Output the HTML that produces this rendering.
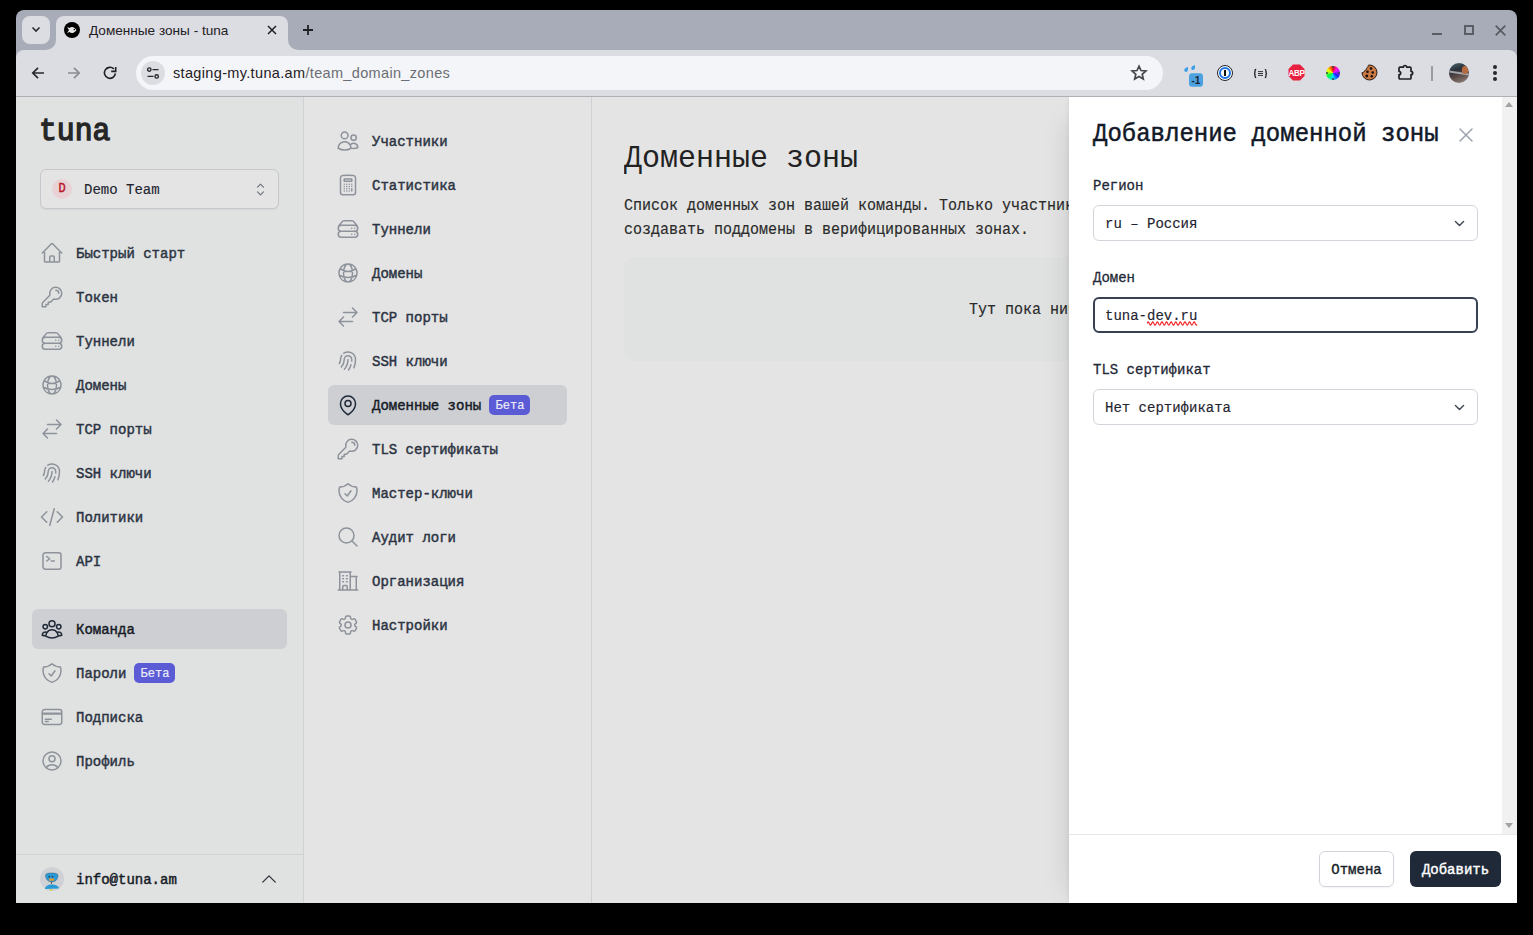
<!DOCTYPE html>
<html><head><meta charset="utf-8">
<style>
*{box-sizing:border-box;margin:0;padding:0}
html,body{width:1533px;height:935px;overflow:hidden;background:#000}
body{position:relative;font-family:"Liberation Mono",monospace}
.a{position:absolute}
.sans{font-family:"Liberation Sans",sans-serif}
svg{display:block}
#win{left:16px;top:10px;width:1501px;height:893px;background:#a8acb8;border-radius:8px 8px 0 0;overflow:hidden}
.tb{background:#dcdde2}
.ic{position:absolute;width:24px;height:24px;fill:none;stroke:#8d929b;stroke-width:1.5;stroke-linecap:round;stroke-linejoin:round}
.nav{position:absolute;font-size:14px;font-weight:normal;-webkit-text-stroke:0.45px #2c3443;color:#2c3443;white-space:nowrap;line-height:16px;margin-top:1px}
.badge{position:absolute;background:#5b5bd6;color:#ececf8;font-size:12px;border-radius:5px;height:20px;line-height:22px;text-align:center;font-weight:normal;-webkit-text-stroke:.2px #ececf8;text-indent:1px}
</style></head><body>
<div id="win" class="a">
  <!-- tab strip -->
  
  
  <!-- active tab -->
  <div class="a tb" style="left:40px;top:6px;width:232px;height:40px;border-radius:8px 8px 0 0"></div>
  <div class="a" style="left:30px;top:30px;width:10px;height:10px;background:#dcdde2"></div><div class="a" style="left:20px;top:20px;width:20px;height:20px;background:#a8acb8;border-bottom-right-radius:10px"></div><div class="a tb" style="left:6px;top:6px;width:28px;height:28px;border-radius:8px"></div>
  <svg class="a" style="left:14px;top:13px" width="12" height="12" viewBox="0 0 12 12"><path d="M2.5 4.5 6 8 9.5 4.5" fill="none" stroke="#2a2c30" stroke-width="1.6"/></svg>
  <div class="a" style="left:272px;top:30px;width:10px;height:10px;background:#dcdde2"></div><div class="a" style="left:272px;top:20px;width:20px;height:20px;background:#a8acb8;border-bottom-left-radius:10px"></div>
  <div class="a" style="left:48px;top:12px;width:16px;height:16px;border-radius:50%;background:#000"></div>
  <svg class="a" style="left:50px;top:15px" width="12" height="10" viewBox="0 0 12 10"><path d="M1 2 3 5 1 8 3.5 7C5 8.5 8 8.8 10.5 5 8 1.2 5 1.5 3.5 3Z" fill="#e6e6e6"/><circle cx="8.3" cy="4.6" r=".8" fill="#000"/></svg>
  <div class="a sans" style="left:73px;top:13px;font-size:13.6px;line-height:16px;color:#1f2023">Доменные зоны - tuna</div>
  <svg class="a" style="left:251px;top:15px" width="10" height="10" viewBox="0 0 10 10"><path d="M1 1l8 8M9 1 1 9" stroke="#1f2023" stroke-width="1.5"/></svg>
  <svg class="a" style="left:285px;top:13px" width="14" height="14" viewBox="0 0 14 14"><path d="M7 2v10M2 7h10" stroke="#1f2023" stroke-width="1.8"/></svg>
  <!-- window controls -->
  <div class="a" style="left:1416px;top:23px;width:10px;height:2px;background:#5a5d63"></div>
  <div class="a" style="left:1448px;top:15px;width:10px;height:10px;border:2px solid #5a5d63"></div>
  <svg class="a" style="left:1479px;top:15px" width="11" height="11" viewBox="0 0 11 11"><path d="M.7.7l9.6 9.6M10.3.7.7 10.3" stroke="#5a5d63" stroke-width="1.8"/></svg>

  <!-- toolbar -->
  <div class="a tb" style="left:0;top:40px;width:1501px;height:46px;border-radius:8px 8px 0 0"></div>
  <div class="a" style="left:0;top:86px;width:1501px;height:1px;background:#aeb0b6"></div>

  <!-- nav buttons -->
  <svg class="a" style="left:15px;top:56px" width="14" height="14" viewBox="0 0 14 14"><path d="M13 7H2.2M7 1.8 1.8 7 7 12.2" fill="none" stroke="#26282c" stroke-width="1.7"/></svg>
  <svg class="a" style="left:51px;top:56px" width="14" height="14" viewBox="0 0 14 14"><path d="M1 7h10.8M7 1.8 12.2 7 7 12.2" fill="none" stroke="#8a8c91" stroke-width="1.7"/></svg>
  <svg class="a" style="left:87px;top:56px" width="14" height="14" viewBox="0 0 14 14"><path d="M12.4 7.4A5.5 5.5 0 1 1 10.9 3" fill="none" stroke="#1f2023" stroke-width="1.6"/><path d="M8.2 5.4h4.5V.9" fill="none" stroke="#1f2023" stroke-width="1.6"/></svg>
  <!-- omnibox -->
  <div class="a" style="left:120px;top:46px;width:1027px;height:34px;border-radius:17px;background:#f4f5f8"></div>
  <div class="a" style="left:125px;top:51px;width:24px;height:24px;border-radius:50%;background:#dcdde2"></div>
  <svg class="a" style="left:130px;top:56px" width="14" height="14" viewBox="0 0 14 14"><circle cx="3.3" cy="3.6" r="1.7" fill="none" stroke="#26282c" stroke-width="1.4"/><path d="M6.5 3.6h6" stroke="#26282c" stroke-width="1.4"/><circle cx="10.7" cy="10.4" r="1.7" fill="none" stroke="#26282c" stroke-width="1.4"/><path d="M1.5 10.4h6" stroke="#26282c" stroke-width="1.4"/></svg>
  <div class="a sans" style="left:157px;top:54px;font-size:14.5px;line-height:18px;color:#1f2023;white-space:nowrap;letter-spacing:.34px">staging-my.tuna.am<span style="color:#6b6e74">/team_domain_zones</span></div>
  <svg class="a" style="left:1114px;top:54px" width="18" height="18" viewBox="0 0 18 18"><path d="M9 2.2l2 4.3 4.9.5-3.7 3.3 1.1 4.8L9 12.6l-4.3 2.5 1.1-4.8L2.1 7l4.9-.5z" fill="none" stroke="#45474c" stroke-width="1.7" stroke-linejoin="miter"/></svg>
  <!-- extensions -->
  <svg class="a" style="left:1166px;top:54px" width="22" height="24" viewBox="0 0 22 24"><path d="M5.6 2.8000000000000003C6.4 4.800000000000001 6.2 6.6000000000000005 5.2 7.4A1.8 1.8 0 0 1 2.2 6.0C2.4 4.6000000000000005 3.8 3.6000000000000005 5.6 2.8000000000000003Z" fill="#3e9ee6"/><path d="M12.6 1.0C13.4 3.0 13.2 4.8 12.2 5.6A1.8 1.8 0 0 1 9.2 4.2C9.4 2.8 10.8 1.8 12.6 1.0Z" fill="#3e9ee6"/><rect x="7" y="9.2" width="14" height="13.6" rx="3" fill="#4ca2e0"/><text x="14" y="20" font-family="Liberation Sans" font-weight="bold" font-size="11" text-anchor="middle" fill="#1d2633" transform="scale(.92 1)" style="transform-origin:14px 0">-1</text></svg>
  <div class="a" style="left:1201px;top:55px;width:16px;height:16px;border-radius:50%;border:1px solid #222;background:#fff"></div>
  <div class="a" style="left:1203px;top:57px;width:12px;height:12px;border-radius:50%;border:2px solid #1a73e8"></div>
  <div class="a" style="left:1208px;top:60px;width:2px;height:6px;background:#111"></div>
  <svg class="a" style="left:1237px;top:58px" width="15" height="11" viewBox="0 0 15 11"><path d="M3.2 1.3C2 1.3 2 2 2 3.3v1c0 .8-.3 1.2-1 1.2.7 0 1 .4 1 1.2v1c0 1.3 0 2 1.2 2M11.8 1.3c1.2 0 1.2.7 1.2 2v1c0 .8.3 1.2 1 1.2-.7 0-1 .4-1 1.2v1c0 1.3 0 2-1.2 2" fill="none" stroke="#1f2023" stroke-width="1.3"/><path d="M5 3.6h5M5 5.5h5M5 7.4h5" stroke="#1f2023" stroke-width=".9"/></svg>
  <svg class="a" style="left:1272px;top:54px" width="17" height="17" viewBox="0 0 17 17"><path d="M5 .5h7L16.5 5v7L12 16.5H5L.5 12V5z" fill="#e8203f"/><text x="8.5" y="11.9" font-family="Liberation Sans" font-weight="bold" font-size="8" text-anchor="middle" fill="#fff" transform="scale(1 1.15)" style="transform-origin:8.5px 8.5px" letter-spacing="-.3">ABP</text></svg>
  <div class="a" style="left:1310px;top:56px;width:13.5px;height:13.5px;border-radius:50%;background:conic-gradient(#e01010,#ff10ff 50deg,#2020ff 120deg,#00e0ff 180deg,#00ff40 240deg,#ffff00 300deg,#ff8000 330deg,#e01010)"></div><div class="a" style="left:1316px;top:56px;width:2px;height:2px;border-radius:50%;background:#3a4a4a"></div><div class="a" style="left:1316px;top:67.5px;width:2px;height:2px;border-radius:50%;background:#3a4a4a"></div><div class="a" style="left:1309.7px;top:61.8px;width:2px;height:2px;border-radius:50%;background:#3a4a4a"></div><div class="a" style="left:1321.8px;top:61.8px;width:2px;height:2px;border-radius:50%;background:#3a4a4a"></div>
  <svg class="a" style="left:1345px;top:54px" width="17" height="17" viewBox="0 0 17 17"><g transform="translate(17 0) scale(-1 1)"><path d="M8.5 1A7.5 7.5 0 1 0 16 8.6c-1.2.2-2.3-.6-2.4-1.8-1.3-.1-2.2-1.2-2-2.5-1.2-.3-1.9-1.4-1.6-2.6-.5-.5-1-.7-1.5-.7z" fill="#c97a45" stroke="#2b1a10" stroke-width="1"/></g><circle cx="10" cy="4.5" r="1.3" fill="#1a0f08"/><circle cx="6.5" cy="7.8" r="1.3" fill="#1a0f08"/><circle cx="11.7" cy="8.5" r="1.2" fill="#1a0f08"/><circle cx="5.8" cy="12" r="1.4" fill="#1a0f08"/><circle cx="10.8" cy="12.3" r="1.2" fill="#1a0f08"/></svg>
  <svg class="a" style="left:1381px;top:53px" width="18" height="18" viewBox="0 0 18 18"><path d="M2 5.2a1 1 0 0 1 1-1H6.3a1.7 1.7 0 0 1 3.4 0H13a1 1 0 0 1 1 1V8.3a1.7 1.7 0 0 1 0 3.4V15a1 1 0 0 1-1 1H3a1 1 0 0 1-1-1V11.7a1.7 1.7 0 0 0 0-3.4Z" fill="none" stroke="#1f2023" stroke-width="1.7" stroke-linejoin="round"/></svg>
  <div class="a" style="left:1415px;top:56px;width:1.5px;height:15px;background:#9a9ca2"></div>
  <div class="a" style="left:1433px;top:53px;width:20px;height:20px;border-radius:50%;overflow:hidden;background:linear-gradient(160deg,#4a6a78 0%,#2a2f38 35%,#5a4a48 60%,#9a8a80 100%)"><div class="a" style="left:0;top:9px;width:20px;height:2px;background:#a0a4a8;transform:rotate(8deg)"></div><div class="a" style="left:13px;top:3px;width:6px;height:8px;border-radius:3px;background:#b86a40"></div></div>
  <div class="a" style="left:1477px;top:55px;width:4px;height:4px;border-radius:50%;background:#26282c"></div>
  <div class="a" style="left:1477px;top:61px;width:4px;height:4px;border-radius:50%;background:#26282c"></div>
  <div class="a" style="left:1477px;top:67px;width:4px;height:4px;border-radius:50%;background:#26282c"></div>
</div>
<div id="page" class="a" style="left:0;top:0;width:1533px;height:935px;clip-path:inset(97px 16px 32px 16px)">
<div class="a" style="left:16px;top:97px;width:288px;height:806px;background:#e0e2e1;border-right:1px solid #d0d1d5"></div>
<div class="a" style="left:304px;top:97px;width:288px;height:806px;background:#e4e4e4;border-right:1px solid #d0d1d5"></div>
<div class="a" style="left:592px;top:97px;width:477px;height:806px;background:#e4e4e4"></div>
<div class="a" style="left:39px;top:112px;font-size:32px;line-height:40px;font-weight:normal;-webkit-text-stroke:1.4px #262626;color:#262626;transform:scaleX(.93);transform-origin:0 0">tuna</div>
<div class="a" style="left:40px;top:169px;width:239px;height:40px;border:1px solid #c6c8cd;border-radius:6px;background:#e4e4e4;box-shadow:0 1px 1px rgba(0,0,0,.05)"></div>
<div class="a" style="left:52px;top:179px;width:20px;height:20px;border-radius:50%;background:#e8d2d5;color:#b8172a;font-size:12px;line-height:21px;text-align:center;-webkit-text-stroke:.4px #b8172a">D</div>
<div class="a" style="left:84px;top:182px;font-size:14px;line-height:16px;color:#1f2430;white-space:nowrap;-webkit-text-stroke:.15px #1f2430">Demo Team</div>
<svg class="ic" style="left:251px;top:180px;width:19px;height:19px;stroke:#6f747c" viewBox="0 0 24 24"><path d="M8.25 15 12 18.75 15.75 15m-7.5-6L12 5.25 15.75 9"/></svg>
<svg class="ic" style="left:40px;top:241px" viewBox="0 0 24 24"><path d="m2.25 12 8.954-8.955c.44-.439 1.152-.439 1.591 0L21.75 12M4.5 9.75v10.125c0 .621.504 1.125 1.125 1.125H9.75v-4.875c0-.621.504-1.125 1.125-1.125h2.25c.621 0 1.125.504 1.125 1.125V21h4.125c.621 0 1.125-.504 1.125-1.125V9.75M8.25 21h8.25"/></svg>
<div class="nav" style="left:76px;top:245px">Быстрый старт</div>
<svg class="ic" style="left:40px;top:285px" viewBox="0 0 24 24"><path d="M15.75 5.25a3 3 0 0 1 3 3m3 0a6 6 0 0 1-7.029 5.912c-.563-.097-1.159.026-1.563.43L10.5 17.25H8.25v2.25H6v2.25H2.25v-2.818c0-.597.237-1.17.659-1.591l6.499-6.499c.404-.404.527-1 .43-1.563A6 6 0 1 1 21.75 8.25Z"/></svg>
<div class="nav" style="left:76px;top:289px">Токен</div>
<svg class="ic" style="left:40px;top:329px" viewBox="0 0 24 24"><path d="M5.25 14.25h13.5m-13.5 0a3 3 0 0 1-3-3m3 3a3 3 0 1 0 0 6h13.5a3 3 0 1 0 0-6m-16.5-3a3 3 0 0 1 3-3h13.5a3 3 0 0 1 3 3m-19.5 0a4.5 4.5 0 0 1 .9-2.7L5.737 5.1a3.375 3.375 0 0 1 2.7-1.35h7.126c1.062 0 2.062.5 2.7 1.35l2.587 3.45a4.5 4.5 0 0 1 .9 2.7m0 0a3 3 0 0 1-3 3m0 3h.008v.008h-.008v-.008Zm0-6h.008v.008h-.008v-.008Zm-3 6h.008v.008h-.008v-.008Zm0-6h.008v.008h-.008v-.008Z"/></svg>
<div class="nav" style="left:76px;top:333px">Туннели</div>
<svg class="ic" style="left:40px;top:373px" viewBox="0 0 24 24"><path d="M12 21a9.004 9.004 0 0 0 8.716-6.747M12 21a9.004 9.004 0 0 1-8.716-6.747M12 21c2.485 0 4.5-4.03 4.5-9S14.485 3 12 3m0 18c-2.485 0-4.5-4.03-4.5-9S9.515 3 12 3m0 0a8.997 8.997 0 0 1 7.843 4.582M12 3a8.997 8.997 0 0 0-7.843 4.582m15.686 0A11.953 11.953 0 0 1 12 10.5c-2.998 0-5.74-1.1-7.843-2.918m15.686 0A8.959 8.959 0 0 1 21 12c0 .778-.099 1.533-.284 2.253m0 0A17.919 17.919 0 0 1 12 16.5c-3.162 0-6.133-.815-8.716-2.247m0 0A9.015 9.015 0 0 1 3 12c0-1.605.42-3.113 1.157-4.418"/></svg>
<div class="nav" style="left:76px;top:377px">Домены</div>
<svg class="ic" style="left:40px;top:417px" viewBox="0 0 24 24"><path d="M7.5 21 3 16.5m0 0L7.5 12M3 16.5h13.5m0-13.5L21 7.5m0 0L16.5 12M21 7.5H7.5"/></svg>
<div class="nav" style="left:76px;top:421px">TCP порты</div>
<svg class="ic" style="left:40px;top:461px" viewBox="0 0 24 24"><path d="M7.864 4.243A7.5 7.5 0 0 1 19.5 10.5c0 2.92-.556 5.709-1.568 8.268M5.742 6.364A7.465 7.465 0 0 0 4.5 10.5a7.464 7.464 0 0 1-1.15 3.993m1.989 3.559A11.209 11.209 0 0 0 8.25 10.5a3.75 3.75 0 1 1 7.5 0c0 .527-.021 1.049-.064 1.565M12 10.5a14.94 14.94 0 0 1-3.6 9.75m6.633-4.596a18.666 18.666 0 0 1-2.485 5.33"/></svg>
<div class="nav" style="left:76px;top:465px">SSH ключи</div>
<svg class="ic" style="left:40px;top:505px" viewBox="0 0 24 24"><path d="M17.25 6.75 22.5 12l-5.25 5.25m-10.5 0L1.5 12l5.25-5.25m7.5-3-4.5 16.5"/></svg>
<div class="nav" style="left:76px;top:509px">Политики</div>
<svg class="ic" style="left:40px;top:549px" viewBox="0 0 24 24"><path d="m6.75 7.5 3 2.25-3 2.25m4.5 0h3m-9 8.25h13.5A2.25 2.25 0 0 0 21 18V6a2.25 2.25 0 0 0-2.25-2.25H5.25A2.25 2.25 0 0 0 3 6v12a2.25 2.25 0 0 0 2.25 2.25Z"/></svg>
<div class="nav" style="left:76px;top:553px">API</div>
<div class="a" style="left:32px;top:609px;width:255px;height:40px;border-radius:6px;background:#cdcfd3"></div>
<svg class="ic" style="left:40px;top:617px;stroke:#1f2937" viewBox="0 0 24 24"><path d="M18 18.72a9.094 9.094 0 0 0 3.741-.479 3 3 0 0 0-4.682-2.72m.94 3.198.001.031c0 .225-.012.447-.037.666A11.944 11.944 0 0 1 12 21c-2.17 0-4.207-.576-5.963-1.584A6.062 6.062 0 0 1 6 18.719m12 0a5.971 5.971 0 0 0-.941-3.197m0 0A5.995 5.995 0 0 0 12 12.75a5.995 5.995 0 0 0-5.058 2.772m0 0a3 3 0 0 0-4.681 2.72 8.986 8.986 0 0 0 3.74.477m.94-3.197a5.971 5.971 0 0 0-.94 3.197M15 6.75a3 3 0 1 1-6 0 3 3 0 0 1 6 0Zm6 3a2.25 2.25 0 1 1-4.5 0 2.25 2.25 0 0 1 4.5 0Zm-13.5 0a2.25 2.25 0 1 1-4.5 0 2.25 2.25 0 0 1 4.5 0Z"/></svg>
<div class="nav" style="left:76px;top:621px;color:#161b26;-webkit-text-stroke-color:#161b26">Команда</div>
<svg class="ic" style="left:40px;top:661px" viewBox="0 0 24 24"><path d="M9 12.75 11.25 15 15 9.75m-3-7.036A11.959 11.959 0 0 1 3.598 6 11.99 11.99 0 0 0 3 9.749c0 5.592 3.824 10.29 9 11.623 5.176-1.332 9-6.03 9-11.622 0-1.31-.21-2.571-.598-3.751h-.152c-3.196 0-6.1-1.248-8.25-3.285Z"/></svg>
<div class="nav" style="left:76px;top:665px">Пароли</div>
<div class="badge" style="left:134px;top:663px;width:41px">Бета</div>
<svg class="ic" style="left:40px;top:705px" viewBox="0 0 24 24"><path d="M2.25 8.25h19.5M2.25 9h19.5m-16.5 5.25h6m-6 2.25h3m-3.75 3h15a2.25 2.25 0 0 0 2.25-2.25V6.75A2.25 2.25 0 0 0 19.5 4.5h-15a2.25 2.25 0 0 0-2.25 2.25v10.5A2.25 2.25 0 0 0 4.5 19.5Z"/></svg>
<div class="nav" style="left:76px;top:709px">Подписка</div>
<svg class="ic" style="left:40px;top:749px" viewBox="0 0 24 24"><path d="M17.982 18.725A7.488 7.488 0 0 0 12 15.75a7.488 7.488 0 0 0-5.982 2.975m11.963 0a9 9 0 1 0-11.963 0m11.963 0A8.966 8.966 0 0 1 12 21a8.966 8.966 0 0 1-5.982-2.275M15 9.75a3 3 0 1 1-6 0 3 3 0 0 1 6 0Z"/></svg>
<div class="nav" style="left:76px;top:753px">Профиль</div>
<div class="a" style="left:16px;top:854px;width:288px;height:1px;background:#d0d1d5"></div>
<svg class="a" style="left:40px;top:867px" width="24" height="24" viewBox="0 0 24 24"><circle cx="12" cy="12" r="12" fill="#d0d1d5"/><path d="M5.5 8.5C5.5 6.5 8 6 11.5 6S18 6.5 18 8.5c0 3-1.5 6-6 6.5C8 15 5.5 12 5.5 8.5z" fill="#2a9ad6" stroke="#3a5060" stroke-width=".4"/><circle cx="9.2" cy="9.8" r=".8" fill="#183040"/><circle cx="12.5" cy="9.8" r=".8" fill="#183040"/><rect x="9" y="11.5" width="5" height="2.2" fill="#e89a2a"/><path d="M11.5 15v2" stroke="#604040" stroke-width=".8"/><path d="M5 22c0-2.5 3-4.5 6.5-4.5S19 19 19 21.5z" fill="#2a9ad6"/><ellipse cx="11" cy="23" rx="1.5" ry=".8" fill="#d8d020"/></svg>
<div class="a" style="left:76px;top:872px;font-size:14px;line-height:16px;color:#161b26;-webkit-text-stroke:.45px #161b26">info@tuna.am</div>
<svg class="ic" style="left:259px;top:869px;width:20px;height:20px;stroke:#2a2f38" viewBox="0 0 24 24"><path d="m4.5 15.75 7.5-7.5 7.5 7.5"/></svg>
<svg class="ic" style="left:336px;top:129px" viewBox="0 0 24 24"><path d="M15 19.128a9.38 9.38 0 0 0 2.625.372 9.337 9.337 0 0 0 4.121-.952 4.125 4.125 0 0 0-7.533-2.493M15 19.128v-.003c0-1.113-.285-2.16-.786-3.07M15 19.128v.106A12.318 12.318 0 0 1 8.624 21c-2.331 0-4.512-.645-6.374-1.766l-.001-.109a6.375 6.375 0 0 1 11.964-3.07M12 6.375a3.375 3.375 0 1 1-6.75 0 3.375 3.375 0 0 1 6.75 0Zm8.25 2.25a2.625 2.625 0 1 1-5.25 0 2.625 2.625 0 0 1 5.25 0Z"/></svg>
<div class="nav" style="left:372px;top:133px">Участники</div>
<svg class="ic" style="left:336px;top:173px" viewBox="0 0 24 24"><path d="M15.75 15.75V18m-7.5-6.75h.008v.008H8.25v-.008Zm0 2.25h.008v.008H8.25V13.5Zm0 2.25h.008v.008H8.25v-.008Zm0 2.25h.008v.008H8.25V18Zm2.498-6.75h.007v.008h-.007v-.008Zm0 2.25h.007v.008h-.007V13.5Zm0 2.25h.007v.008h-.007v-.008Zm0 2.25h.007v.008h-.007V18Zm2.504-6.75h.008v.008h-.008v-.008Zm0 2.25h.008v.008h-.008V13.5Zm0 2.25h.008v.008h-.008v-.008Zm0 2.25h.008v.008h-.008V18Zm2.498-6.75h.008v.008h-.008v-.008Zm0 2.25h.008v.008h-.008V13.5ZM8.25 6h7.5v2.25h-7.5V6ZM12 2.25c-1.892 0-3.758.11-5.593.322C5.307 2.7 4.5 3.65 4.5 4.757V19.5a2.25 2.25 0 0 0 2.25 2.25h10.5a2.25 2.25 0 0 0 2.25-2.25V4.757c0-1.108-.806-2.057-1.907-2.185A48.507 48.507 0 0 0 12 2.25Z"/></svg>
<div class="nav" style="left:372px;top:177px">Статистика</div>
<svg class="ic" style="left:336px;top:217px" viewBox="0 0 24 24"><path d="M5.25 14.25h13.5m-13.5 0a3 3 0 0 1-3-3m3 3a3 3 0 1 0 0 6h13.5a3 3 0 1 0 0-6m-16.5-3a3 3 0 0 1 3-3h13.5a3 3 0 0 1 3 3m-19.5 0a4.5 4.5 0 0 1 .9-2.7L5.737 5.1a3.375 3.375 0 0 1 2.7-1.35h7.126c1.062 0 2.062.5 2.7 1.35l2.587 3.45a4.5 4.5 0 0 1 .9 2.7m0 0a3 3 0 0 1-3 3m0 3h.008v.008h-.008v-.008Zm0-6h.008v.008h-.008v-.008Zm-3 6h.008v.008h-.008v-.008Zm0-6h.008v.008h-.008v-.008Z"/></svg>
<div class="nav" style="left:372px;top:221px">Туннели</div>
<svg class="ic" style="left:336px;top:261px" viewBox="0 0 24 24"><path d="M12 21a9.004 9.004 0 0 0 8.716-6.747M12 21a9.004 9.004 0 0 1-8.716-6.747M12 21c2.485 0 4.5-4.03 4.5-9S14.485 3 12 3m0 18c-2.485 0-4.5-4.03-4.5-9S9.515 3 12 3m0 0a8.997 8.997 0 0 1 7.843 4.582M12 3a8.997 8.997 0 0 0-7.843 4.582m15.686 0A11.953 11.953 0 0 1 12 10.5c-2.998 0-5.74-1.1-7.843-2.918m15.686 0A8.959 8.959 0 0 1 21 12c0 .778-.099 1.533-.284 2.253m0 0A17.919 17.919 0 0 1 12 16.5c-3.162 0-6.133-.815-8.716-2.247m0 0A9.015 9.015 0 0 1 3 12c0-1.605.42-3.113 1.157-4.418"/></svg>
<div class="nav" style="left:372px;top:265px">Домены</div>
<svg class="ic" style="left:336px;top:305px" viewBox="0 0 24 24"><path d="M7.5 21 3 16.5m0 0L7.5 12M3 16.5h13.5m0-13.5L21 7.5m0 0L16.5 12M21 7.5H7.5"/></svg>
<div class="nav" style="left:372px;top:309px">TCP порты</div>
<svg class="ic" style="left:336px;top:349px" viewBox="0 0 24 24"><path d="M7.864 4.243A7.5 7.5 0 0 1 19.5 10.5c0 2.92-.556 5.709-1.568 8.268M5.742 6.364A7.465 7.465 0 0 0 4.5 10.5a7.464 7.464 0 0 1-1.15 3.993m1.989 3.559A11.209 11.209 0 0 0 8.25 10.5a3.75 3.75 0 1 1 7.5 0c0 .527-.021 1.049-.064 1.565M12 10.5a14.94 14.94 0 0 1-3.6 9.75m6.633-4.596a18.666 18.666 0 0 1-2.485 5.33"/></svg>
<div class="nav" style="left:372px;top:353px">SSH ключи</div>
<div class="a" style="left:328px;top:385px;width:239px;height:40px;border-radius:6px;background:#cdcfd3"></div>
<svg class="ic" style="left:336px;top:393px;stroke:#1f2937" viewBox="0 0 24 24"><path d="M15 10.5a3 3 0 1 1-6 0 3 3 0 0 1 6 0Z"/><path d="M19.5 10.5c0 7.142-7.5 11.25-7.5 11.25S4.5 17.642 4.5 10.5a7.5 7.5 0 1 1 15 0Z"/></svg>
<div class="badge" style="left:489px;top:395px;width:41px">Бета</div>
<div class="nav" style="left:372px;top:397px;color:#161b26;-webkit-text-stroke-color:#161b26">Доменные зоны</div>
<svg class="ic" style="left:336px;top:437px" viewBox="0 0 24 24"><path d="M15.75 5.25a3 3 0 0 1 3 3m3 0a6 6 0 0 1-7.029 5.912c-.563-.097-1.159.026-1.563.43L10.5 17.25H8.25v2.25H6v2.25H2.25v-2.818c0-.597.237-1.17.659-1.591l6.499-6.499c.404-.404.527-1 .43-1.563A6 6 0 1 1 21.75 8.25Z"/></svg>
<div class="nav" style="left:372px;top:441px">TLS сертификаты</div>
<svg class="ic" style="left:336px;top:481px" viewBox="0 0 24 24"><path d="M9 12.75 11.25 15 15 9.75m-3-7.036A11.959 11.959 0 0 1 3.598 6 11.99 11.99 0 0 0 3 9.749c0 5.592 3.824 10.29 9 11.623 5.176-1.332 9-6.03 9-11.622 0-1.31-.21-2.571-.598-3.751h-.152c-3.196 0-6.1-1.248-8.25-3.285Z"/></svg>
<div class="nav" style="left:372px;top:485px">Мастер-ключи</div>
<svg class="ic" style="left:336px;top:525px" viewBox="0 0 24 24"><path d="m21 21-5.197-5.197m0 0A7.5 7.5 0 1 0 5.196 5.196a7.5 7.5 0 0 0 10.607 10.607Z"/></svg>
<div class="nav" style="left:372px;top:529px">Аудит логи</div>
<svg class="ic" style="left:336px;top:569px" viewBox="0 0 24 24"><path d="M2.25 21h19.5m-18-18v18m10.5-18v18m6-13.5V21M6.75 6.75h.75m-.75 3h.75m-.75 3h.75m3-6h.75m-.75 3h.75m-.75 3h.75M6.75 21v-3.375c0-.621.504-1.125 1.125-1.125h2.25c.621 0 1.125.504 1.125 1.125V21M3 3h12m-.75 4.5H21"/></svg>
<div class="nav" style="left:372px;top:573px">Организация</div>
<svg class="ic" style="left:336px;top:613px" viewBox="0 0 24 24"><path d="M9.594 3.94c.09-.542.56-.94 1.11-.94h2.593c.55 0 1.02.398 1.11.94l.213 1.281c.063.374.313.686.645.87.074.04.147.083.22.127.325.196.72.257 1.075.124l1.217-.456a1.125 1.125 0 0 1 1.37.49l1.296 2.247a1.125 1.125 0 0 1-.26 1.431l-1.003.827c-.293.241-.438.613-.43.992a7.723 7.723 0 0 1 0 .255c-.008.378.137.75.43.991l1.004.827c.424.35.534.955.26 1.43l-1.298 2.247a1.125 1.125 0 0 1-1.369.491l-1.217-.456c-.355-.133-.75-.072-1.076.124a6.47 6.47 0 0 1-.22.128c-.331.183-.581.495-.644.869l-.213 1.281c-.09.543-.56.94-1.11.94h-2.594c-.55 0-1.019-.398-1.11-.94l-.213-1.281c-.062-.374-.312-.686-.644-.87a6.52 6.52 0 0 1-.22-.127c-.325-.196-.72-.257-1.076-.124l-1.217.456a1.125 1.125 0 0 1-1.369-.49l-1.297-2.247a1.125 1.125 0 0 1 .26-1.431l1.004-.827c.292-.24.437-.613.43-.991a6.932 6.932 0 0 1 0-.255c.007-.38-.138-.751-.43-.992l-1.004-.827a1.125 1.125 0 0 1-.26-1.43l1.297-2.247a1.125 1.125 0 0 1 1.37-.491l1.216.456c.356.133.751.072 1.076-.124.072-.044.146-.086.22-.128.332-.183.582-.495.644-.869l.214-1.28Z"/><path d="M15 12a3 3 0 1 1-6 0 3 3 0 0 1 6 0Z"/></svg>
<div class="nav" style="left:372px;top:617px">Настройки</div>
<div class="a" style="left:624px;top:139px;font-size:32px;line-height:40px;color:#222;white-space:nowrap;transform:scaleX(.9375);transform-origin:0 0">Доменные зоны</div>
<div class="a" style="left:624px;top:194px;font-size:16px;line-height:24px;color:#2a2a2a;white-space:nowrap;transform:scaleX(.9375);transform-origin:0 0;-webkit-text-stroke:.15px #2a2a2a">Список доменных зон вашей команды. Только участники<br>создавать поддомены в верифицированных зонах.</div>
<div class="a" style="left:624px;top:257px;width:900px;height:104px;border-radius:12px;background:#e0e1e1"></div>
<div class="a" style="left:969px;top:300px;font-size:16px;line-height:20px;color:#2a2a2a;white-space:nowrap;transform:scaleX(.9375);transform-origin:0 0;-webkit-text-stroke:.15px #2a2a2a">Тут пока ничего нет</div>
<div class="a" style="left:1069px;top:122px;width:448px;height:770px;background:#fff;box-shadow:0 0 26px rgba(0,0,0,.13)"></div><div class="a" style="left:1069px;top:97px;width:448px;height:806px;background:#fff;box-shadow:0 0 5px rgba(0,0,0,.08)"></div>
<div class="a" style="left:1093px;top:120px;font-size:25px;line-height:30px;color:#111827;white-space:nowrap;transform:scaleX(.96);transform-origin:0 0;-webkit-text-stroke:.5px #111827">Добавление доменной зоны</div>
<svg class="ic" style="left:1454px;top:123px;stroke:#9ca3af;stroke-width:1.5" viewBox="0 0 24 24"><path d="M6 18 18 6M6 6l12 12"/></svg>
<div class="a" style="left:1093px;top:178px;font-size:14px;line-height:16px;color:#1f2937;white-space:nowrap;-webkit-text-stroke:.3px #1f2937">Регион</div>
<div class="a" style="left:1093px;top:270px;font-size:14px;line-height:16px;color:#1f2937;white-space:nowrap;-webkit-text-stroke:.3px #1f2937">Домен</div>
<div class="a" style="left:1093px;top:362px;font-size:14px;line-height:16px;color:#1f2937;white-space:nowrap;-webkit-text-stroke:.3px #1f2937">TLS сертификат</div>
<div class="a" style="left:1093px;top:205px;width:385px;height:36px;border:1px solid #d1d5db;border-radius:6px"></div>
<div class="a" style="left:1105px;top:216px;font-size:14px;line-height:16px;color:#1f2430;white-space:nowrap;-webkit-text-stroke:.15px #1f2430">ru – Россия</div>
<svg class="ic" style="left:1453px;top:217px;width:13px;height:13px;stroke:#3f4753;stroke-width:2.6" viewBox="0 0 24 24"><path d="m19.5 8.25-7.5 7.5-7.5-7.5"/></svg>
<div class="a" style="left:1093px;top:297px;width:385px;height:36px;border:2px solid #374151;border-radius:6px"></div>
<div class="a" style="left:1105px;top:308px;font-size:14px;line-height:16px;color:#1f2430;white-space:nowrap;-webkit-text-stroke:.15px #1f2430">tuna-dev.ru</div>
<svg class="a" style="left:1147px;top:321px" width="51" height="5" viewBox="0 0 51 5"><path d="M0.00 2.50 L0.25 1.96 L0.50 1.49 L0.75 1.13 L1.00 0.93 L1.25 0.91 L1.50 1.08 L1.75 1.41 L2.00 1.86 L2.25 2.39 L2.50 2.93 L2.75 3.42 L3.00 3.81 L3.25 4.04 L3.50 4.10 L3.75 3.97 L4.00 3.67 L4.25 3.24 L4.50 2.72 L4.75 2.17 L5.00 1.67 L5.25 1.26 L5.50 0.99 L5.75 0.90 L6.00 0.99 L6.25 1.26 L6.50 1.67 L6.75 2.17 L7.00 2.72 L7.25 3.24 L7.50 3.67 L7.75 3.97 L8.00 4.10 L8.25 4.04 L8.50 3.81 L8.75 3.42 L9.00 2.93 L9.25 2.39 L9.50 1.86 L9.75 1.41 L10.00 1.08 L10.25 0.91 L10.50 0.93 L10.75 1.13 L11.00 1.49 L11.25 1.96 L11.50 2.50 L11.75 3.04 L12.00 3.51 L12.25 3.87 L12.50 4.07 L12.75 4.09 L13.00 3.92 L13.25 3.59 L13.50 3.14 L13.75 2.61 L14.00 2.07 L14.25 1.58 L14.50 1.19 L14.75 0.96 L15.00 0.90 L15.25 1.03 L15.50 1.33 L15.75 1.76 L16.00 2.28 L16.25 2.83 L16.50 3.33 L16.75 3.74 L17.00 4.01 L17.25 4.10 L17.50 4.01 L17.75 3.74 L18.00 3.33 L18.25 2.83 L18.50 2.28 L18.75 1.76 L19.00 1.33 L19.25 1.03 L19.50 0.90 L19.75 0.96 L20.00 1.19 L20.25 1.58 L20.50 2.07 L20.75 2.61 L21.00 3.14 L21.25 3.59 L21.50 3.92 L21.75 4.09 L22.00 4.07 L22.25 3.87 L22.50 3.51 L22.75 3.04 L23.00 2.50 L23.25 1.96 L23.50 1.49 L23.75 1.13 L24.00 0.93 L24.25 0.91 L24.50 1.08 L24.75 1.41 L25.00 1.86 L25.25 2.39 L25.50 2.93 L25.75 3.42 L26.00 3.81 L26.25 4.04 L26.50 4.10 L26.75 3.97 L27.00 3.67 L27.25 3.24 L27.50 2.72 L27.75 2.17 L28.00 1.67 L28.25 1.26 L28.50 0.99 L28.75 0.90 L29.00 0.99 L29.25 1.26 L29.50 1.67 L29.75 2.17 L30.00 2.72 L30.25 3.24 L30.50 3.67 L30.75 3.97 L31.00 4.10 L31.25 4.04 L31.50 3.81 L31.75 3.42 L32.00 2.93 L32.25 2.39 L32.50 1.86 L32.75 1.41 L33.00 1.08 L33.25 0.91 L33.50 0.93 L33.75 1.13 L34.00 1.49 L34.25 1.96 L34.50 2.50 L34.75 3.04 L35.00 3.51 L35.25 3.87 L35.50 4.07 L35.75 4.09 L36.00 3.92 L36.25 3.59 L36.50 3.14 L36.75 2.61 L37.00 2.07 L37.25 1.58 L37.50 1.19 L37.75 0.96 L38.00 0.90 L38.25 1.03 L38.50 1.33 L38.75 1.76 L39.00 2.28 L39.25 2.83 L39.50 3.33 L39.75 3.74 L40.00 4.01 L40.25 4.10 L40.50 4.01 L40.75 3.74 L41.00 3.33 L41.25 2.83 L41.50 2.28 L41.75 1.76 L42.00 1.33 L42.25 1.03 L42.50 0.90 L42.75 0.96 L43.00 1.19 L43.25 1.58 L43.50 2.07 L43.75 2.61 L44.00 3.14 L44.25 3.59 L44.50 3.92 L44.75 4.09 L45.00 4.07 L45.25 3.87 L45.50 3.51 L45.75 3.04 L46.00 2.50 L46.25 1.96 L46.50 1.49 L46.75 1.13 L47.00 0.93 L47.25 0.91 L47.50 1.08 L47.75 1.41 L48.00 1.86 L48.25 2.39 L48.50 2.93 L48.75 3.42 L49.00 3.81 L49.25 4.04 L49.50 4.10 L49.75 3.97 L50.00 3.67" fill="none" stroke="#f01a1a" stroke-width="1.1"/></svg>
<div class="a" style="left:1093px;top:389px;width:385px;height:36px;border:1px solid #d1d5db;border-radius:6px"></div>
<div class="a" style="left:1105px;top:400px;font-size:14px;line-height:16px;color:#1f2430;white-space:nowrap;-webkit-text-stroke:.15px #1f2430">Нет сертификата</div>
<svg class="ic" style="left:1453px;top:401px;width:13px;height:13px;stroke:#3f4753;stroke-width:2.6" viewBox="0 0 24 24"><path d="m19.5 8.25-7.5 7.5-7.5-7.5"/></svg>
<div class="a" style="left:1502px;top:97px;width:15px;height:738px;background:#f1f1f1"></div>
<div class="a" style="left:1505px;top:102px;width:0;height:0;border-left:4.5px solid transparent;border-right:4.5px solid transparent;border-bottom:5px solid #a3a3a3"></div>
<div class="a" style="left:1505px;top:823px;width:0;height:0;border-left:4.5px solid transparent;border-right:4.5px solid transparent;border-top:5px solid #a3a3a3"></div>
<div class="a" style="left:1069px;top:834px;width:448px;height:1px;background:#e5e7eb"></div>
<div class="a" style="left:1319px;top:851px;width:75px;height:36px;border:1px solid #d1d5db;border-radius:6px;font-size:14px;line-height:36px;text-align:center;color:#1a1f2b;-webkit-text-stroke:.4px #1a1f2b;box-shadow:0 1px 2px rgba(0,0,0,.05)">Отмена</div>
<div class="a" style="left:1410px;top:851px;width:91px;height:36px;border-radius:6px;background:#1f2937;font-size:14px;line-height:38px;text-align:center;color:#fff;-webkit-text-stroke:.4px #fff">Добавить</div>
</div>
</body></html>
